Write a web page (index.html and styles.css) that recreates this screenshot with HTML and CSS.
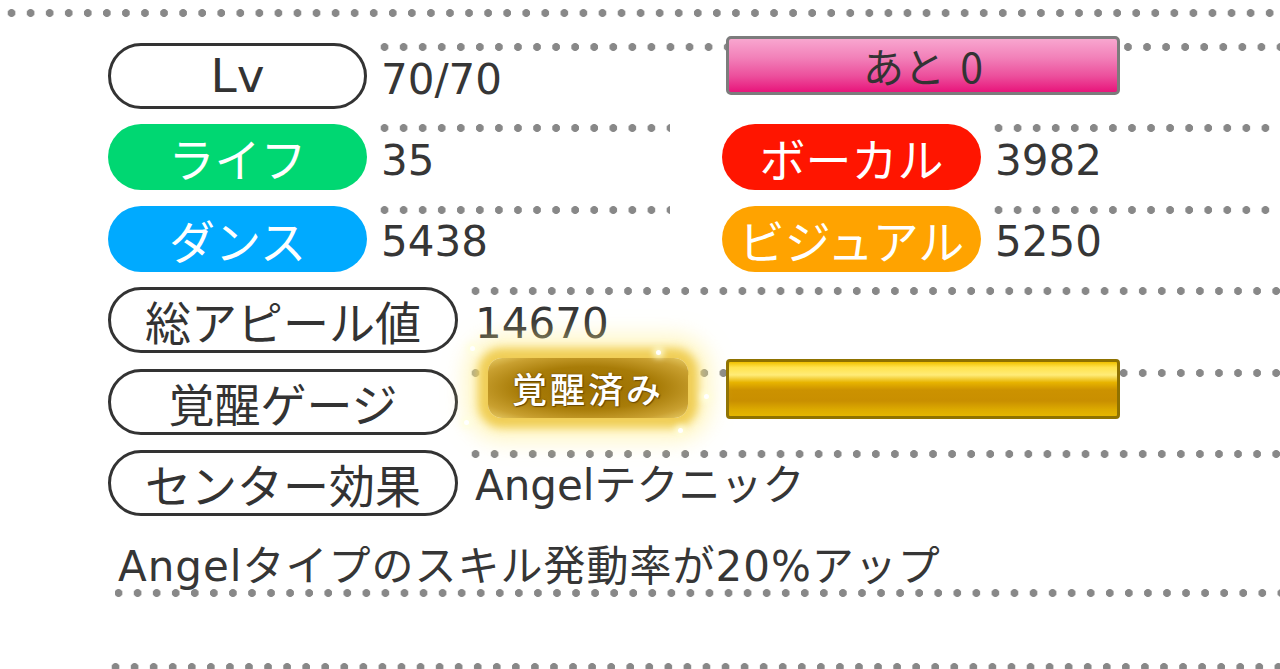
FILE: index.html
```html
<!DOCTYPE html>
<html lang="ja">
<head>
    <meta charset="UTF-8">
    <title>アイドル詳細</title>
    <link rel="stylesheet" href="styles.css">
</head>
<body>

    <div class="sheet">
        <div class="dots dots-top"></div>

        <div class="stats">
            <!-- レベルと特訓までの残り -->
            <div class="row">
                <div class="stat">
                    <span class="tag tag-plain tag-lv">Lv</span>
                    <div class="val">
                        <span class="num num-lv">70/70</span>
                        <div class="bar bar-pink">あと 0</div>
                    </div>
                </div>
            </div>

            <div class="row">
                <div class="stat stat-half">
                    <span class="tag tag-life">ライフ</span>
                    <div class="val"><span class="num">35</span></div>
                </div>
                <div class="stat">
                    <span class="tag tag-vocal">ボーカル</span>
                    <div class="val"><span class="num">3982</span></div>
                </div>
            </div>

            <div class="row">
                <div class="stat stat-half">
                    <span class="tag tag-dance">ダンス</span>
                    <div class="val"><span class="num">5438</span></div>
                </div>
                <div class="stat">
                    <span class="tag tag-visual">ビジュアル</span>
                    <div class="val"><span class="num">5250</span></div>
                </div>
            </div>

            <div class="row">
                <div class="stat">
                    <span class="tag tag-plain tag-long">総アピール値</span>
                    <div class="val val-long"><span class="num">14670</span></div>
                </div>
            </div>

            <!-- 覚醒ゲージ (満タン) -->
            <div class="row">
                <div class="stat">
                    <span class="tag tag-plain tag-long">覚醒ゲージ</span>
                    <div class="val val-long">
                        <div class="awake">
                            覚醒済み
                            <span class="spark s1"></span>
                            <span class="spark s2"></span>
                            <span class="spark s3"></span>
                            <span class="spark s4"></span>
                            <span class="spark s5"></span>
                        </div>
                        <div class="bar bar-gold"></div>
                    </div>
                </div>
            </div>

            <div class="row">
                <div class="stat">
                    <span class="tag tag-plain tag-long">センター効果</span>
                    <div class="val val-long"><span class="num">Angelテクニック</span></div>
                </div>
            </div>
        </div>

        <div class="desc">Angelタイプのスキル発動率が20%アップ</div>
        <div class="dots dots-end"></div>
    </div>

</body>
</html>
```

FILE: styles.css
```css
body {
    margin: 0;
    background-color: #fff;
    font-family: "DejaVu Sans", "Noto Sans CJK JP", sans-serif;
    color: #363636;
    overflow: hidden;
}
.sheet {
    width: 1280px;
    height: 669px;
}
/* 点線 (灰色の丸を横に並べる) */
.dots {
    height: 8px;
    background-image: radial-gradient(circle, #888 3.6px, rgba(136, 136, 136, 0) 4.3px);
    background-size: 19.07px 8px;
    background-repeat: repeat-x;
}
.dots-top {
    margin: 9px 0 0 2px;
}
.dots-end {
    margin: 66px 0 0 106px;
}
.stats {
    margin-top: 26px;
    padding-left: 108px;
    display: flex;
    flex-direction: column;
    gap: 15.4px;
}
.row {
    display: flex;
    height: 66px;
}
.stat {
    display: flex;
    flex: 1;
}
.stat-half {
    flex: 0 0 562px;
    margin-right: 52px;
}
.tag {
    flex: 0 0 259px;
    height: 66px;
    box-sizing: border-box;
    border-radius: 33px;
    display: flex;
    align-items: center;
    justify-content: center;
    font-family: "Noto Sans CJK JP", sans-serif;
    font-size: 46px;
    font-weight: 400;
    color: #fff;
}
.tag-plain {
    border: 3.5px solid #333;
    background-color: #fff;
    color: #333;
}
.tag-lv {
    font-family: "DejaVu Sans", sans-serif;
    font-size: 47px;
    padding-bottom: 2px;
}
.tag-long {
    flex-basis: 350px;
}
.tag-life { background-color: #00d772; }
.tag-dance { background-color: #00aaff; }
.tag-vocal { background-color: #ff1500; }
.tag-visual { background-color: #ffa300; }

.val {
    flex: 1;
    margin-left: 8px;
    display: flex;
    align-items: flex-start;
    background-image: radial-gradient(circle, #888 3.6px, rgba(136, 136, 136, 0) 4.3px);
    background-size: 19.07px 8px;
    background-repeat: repeat-x;
    background-position: -6px bottom 1px;
}
.num {
    padding: 3.5px 0 0 6px;
    font-size: 42px;
    line-height: 66px;
    white-space: nowrap;
}
.val-long .num {
    padding-left: 9px;
}
.num-lv {
    width: 351px;
    box-sizing: border-box;
    flex: none;
}
.bar {
    flex: none;
    width: 394px;
    box-sizing: border-box;
    border-radius: 5px;
}
.bar-pink {
    margin-top: -7px;
    height: 59px;
    border: 3px solid #7c7c7c;
    background: linear-gradient(to bottom, #f8a6cf 0%, #f281b9 35%, #ec4f9c 70%, #e8157b 100%);
    font-family: "Noto Sans CJK JP", sans-serif;
    font-size: 41px;
    font-weight: 400;
    word-spacing: 6px;
    color: #333;
    text-align: center;
    line-height: 52px;
}
.bar-gold {
    margin: -10px 0 0 38px;
    height: 60px;
    border: 3px solid #8f7200;
    border-radius: 4px;
    background: linear-gradient(to bottom, #f0c000 0%, #ffe34d 10%, #ffec78 24%, #e7b300 38%, #cc9200 52%, #c98f00 72%, #dcaa00 88%, #e5b600 100%);
}
/* 覚醒済みバッジ (周りが光っている) */
.awake {
    position: relative;
    z-index: 1;
    flex: none;
    margin: -11px 0 0 22px;
    width: 200px;
    height: 60px;
    border-radius: 14px;
    background: radial-gradient(ellipse at center, #9a6e00 0%, #a87c08 50%, #c9a030 80%, #e8cc66 100%);
    box-shadow: 0 0 8px 10px rgba(236, 196, 60, 0.8), 0 0 22px 22px rgba(255, 238, 140, 0.55);
    font-family: "Noto Sans CJK JP", sans-serif;
    font-size: 35px;
    font-weight: 500;
    letter-spacing: 3px;
    color: #fff;
    text-align: center;
    line-height: 60px;
    text-shadow: 0 0 2px #6b4a00, 1px 1px 1px #6b4a00;
}
.spark {
    position: absolute;
    width: 5px;
    height: 5px;
    border-radius: 50%;
    background: #fff;
    box-shadow: 0 0 6px 3px rgba(255, 255, 220, 0.9);
}
.s1 { left: -24px; top: 62px; }
.s2 { left: 168px; top: -8px; }
.s3 { left: 216px; top: 36px; }
.s4 { left: 190px; top: 70px; }
.s5 { left: -18px; top: -12px; }

.desc {
    margin-left: 115px;
    height: 81px;
    box-sizing: border-box;
    padding: 30px 0 0 3px;
    font-size: 42px;
    line-height: 42px;
    letter-spacing: 1px;
    white-space: nowrap;
    background-image: radial-gradient(circle, #888 3.6px, rgba(136, 136, 136, 0) 4.3px);
    background-size: 19.07px 8px;
    background-repeat: repeat-x;
    background-position: -6px bottom;
}
```
